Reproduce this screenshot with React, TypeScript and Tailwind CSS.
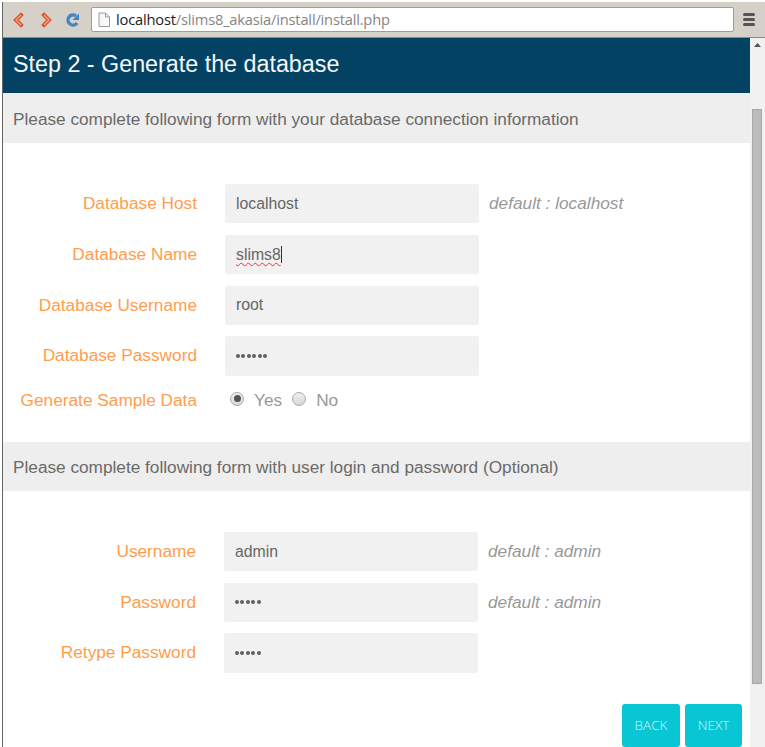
import type { ReactNode } from "react";

function Row({ label, value, hint, caret, spell }: { label: string; value: string; hint?: string; caret?: boolean; spell?: boolean }) {
  const secret = value.startsWith("•");
  return (
    <div className="flex h-[39.4px] items-stretch">
      <label className="w-[194px] shrink-0 text-right text-[17.25px] leading-[38px] text-[#ff9d4d]">{label}</label>
      <div className="ml-[28px] flex w-[254px] shrink-0 items-center rounded-[2px] bg-[#f1f1f1] pl-[11px] text-[15.8px] text-[#666]">
        {secret ? (
          <span className="flex gap-[1.7px]">
            {value.split("").map((_, i) => (
              <i key={i} className="h-[3.8px] w-[3.8px] rounded-full bg-[#606060]" />
            ))}
          </span>
        ) : (
          <span className={spell ? "underline decoration-[#e33] decoration-wavy decoration-1 underline-offset-[2px]" : ""}>{value}</span>
        )}
        {caret && <span className="h-[17px] w-px bg-[#333]" />}
      </div>
      {hint && <em className="ml-[10px] text-[17.25px] leading-[38px] text-[#999]">{hint}</em>}
    </div>
  );
}

function Band({ children, className }: { children: ReactNode; className: string }) {
  return <h2 className={"bg-[#eee] pl-[10px] text-[17.23px] text-[#6a6a6a] " + className}>{children}</h2>;
}

function Radio({ on }: { on?: boolean }) {
  return (
    <span className="flex h-[14px] w-[14px] items-center justify-center rounded-full border border-[#aaa] bg-linear-to-b from-[#eee] to-[#d8d8d8]">
      {on && <i className="h-[7px] w-[7px] rounded-full bg-[#555]" />}
    </span>
  );
}

export default function App() {
  return (
    <div className="flex h-[747px] w-[765px] flex-col overflow-hidden bg-white font-['Liberation_Sans',Arial,sans-serif]">
      <div className="h-[2px] shrink-0 overflow-hidden" />
      <div className="flex min-h-0 flex-1">
        <div className="ml-[2px] w-px shrink-0 bg-[#666]" />
        <div className="flex min-w-0 flex-1 flex-col">
          <header className="flex h-[36px] shrink-0 items-center border-b border-[#8b8a88] bg-[#d5d0c8]">
            <svg width="70" height="20" viewBox="0 0 70 20" className="ml-[6px] shrink-0" fill="none">
              <path d="M12 5 7 10l5 5" stroke="#d9532c" strokeWidth="4" strokeLinecap="square" />
              <path d="M12 5 7 10l5 5" stroke="#f9a77f" strokeWidth="1.3" />
              <path d="M35 5l5 5-5 5" stroke="#d9532c" strokeWidth="4" strokeLinecap="square" />
              <path d="M35 5l5 5-5 5" stroke="#f9a77f" strokeWidth="1.3" />
              <path d="M68 13a5 5 0 1 1-1-7" stroke="#4684c4" strokeWidth="3.4" />
              <path d="M70.500 3v7h-7z" fill="#4684c4" />
            </svg>
            <div className="ml-[12px] flex h-[25px] w-[643px] shrink-0 items-center rounded-[2px] border border-[#a09c96] bg-white">
              <svg width="13" height="16" viewBox="0 0 13 16" className="ml-[6px] shrink-0" fill="#f8f8f8" stroke="#999">
                <path d="M1 1h6.500l4 4v9.500H1zM7.500 1v4h4" />
              </svg>
              <span className="ml-[5px] whitespace-nowrap font-['Open_Sans',sans-serif] text-[14.7px] tracking-[-0.2px] text-[#858585]">
                <span className="text-[#222]">localhost</span>/slims8_akasia/install/install.php
              </span>
            </div>
            <div className="ml-[9px] flex w-[12px] flex-col gap-[2px]">
              <i className="h-[3px] rounded bg-[#555]" />
              <i className="h-[3px] rounded bg-[#555]" />
              <i className="h-[3px] rounded bg-[#555]" />
            </div>
          </header>
          <div className="flex min-h-0 flex-1">
            <main className="w-[747px] shrink-0">
              <h1 className="h-[55px] bg-[#044263] pl-[10px] text-[23.3px] leading-[53px] text-[#f4f8fa]">Step 2 - Generate the database</h1>
              <Band className="h-[50px] leading-[52px]">Please complete following form with your database connection information</Band>
              <div className="flex flex-col gap-[11.4px] pt-[41px]">
                <Row label="Database Host" value="localhost" hint="default : localhost" />
                <Row label="Database Name" value="slims8" caret spell />
                <Row label="Database Username" value="root" />
                <Row label="Database Password" value="••••••" />
              </div>
              <div className="mt-[12px] flex h-[54px] pt-[1px] text-[17.25px] leading-[22px] text-[#999]">
                <span className="w-[194px] text-right text-[#ff9d4d]">Generate Sample Data</span>
                <span className="ml-[33px] mt-[3px]"><Radio on /></span>
                <span className="ml-[10px]">Yes</span>
                <span className="ml-[10px] mt-[3px]"><Radio /></span>
                <span className="ml-[10px]">No</span>
              </div>
              <Band className="h-[49px] leading-[51px]">Please complete following form with user login and password (Optional)</Band>
              <div className="-ml-px flex flex-col gap-[11.4px] pt-[41px]">
                <Row label="Username" value="admin" hint="default : admin" />
                <Row label="Password" value="•••••" hint="default : admin" />
                <Row label="Retype Password" value="•••••" />
              </div>
              <div className="mt-[31px] flex justify-end gap-[5px] pr-[8px] font-['Open_Sans',sans-serif] text-[13.5px] font-light text-[#d5f6f8]">
                <button className="h-[43px] w-[58px] rounded-[3px] bg-[#08c6d4]">BACK</button>
                <button className="h-[43px] w-[57px] rounded-[3px] bg-[#08c6d4]">NEXT</button>
              </div>
            </main>
            <aside className="flex flex-1 flex-col items-start bg-[#f1f1f1]">
              <svg width="7" height="4" className="ml-[4px] mt-[5px]"><path d="M0 4 3.500 0 7 4z" fill="#555" /></svg>
              <div className="ml-[2px] mt-[62px] h-[575px] w-[10px] border border-[#a8a8a8] bg-[#bcbcbc]" />
            </aside>
          </div>
        </div>
      </div>
    </div>
  );
}
